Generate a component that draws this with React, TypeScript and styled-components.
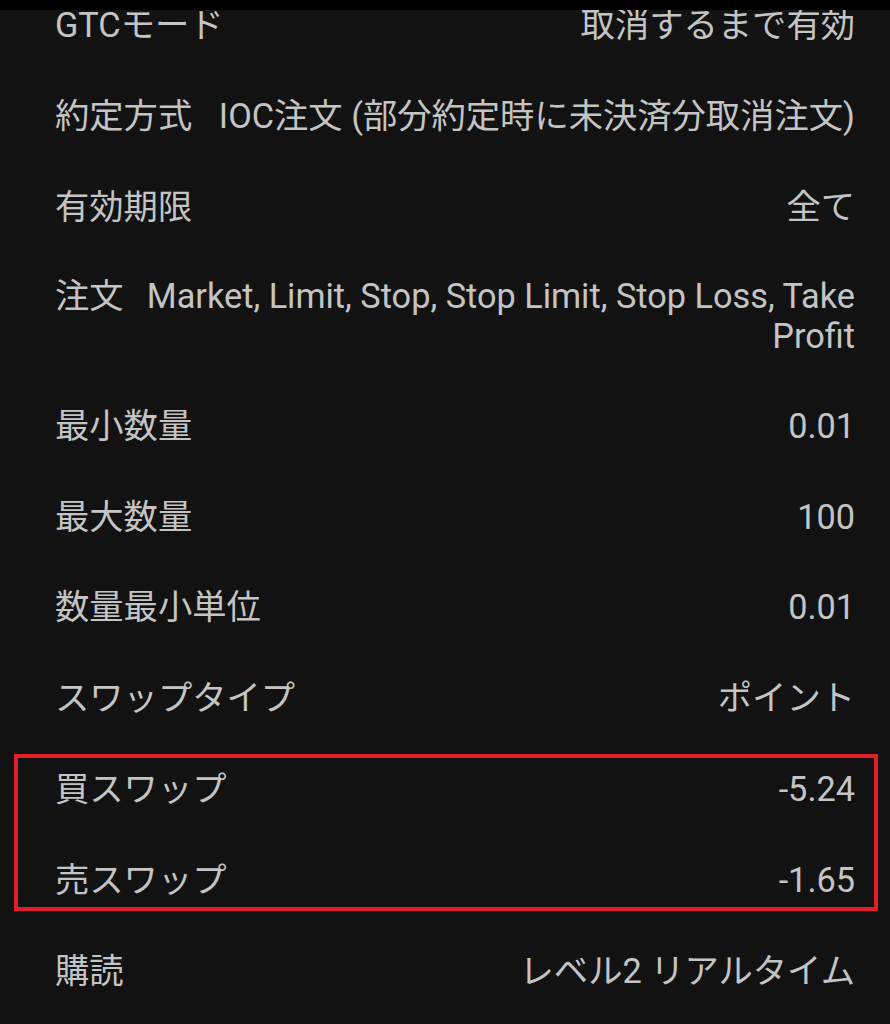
import React from "react";
import styled, { createGlobalStyle } from "styled-components";

const Global = createGlobalStyle`
  html, body {
    margin: 0;
    padding: 0;
    background: #121212;
    overflow: hidden;
  }
  * { box-sizing: border-box; }
`;

const Screen = styled.div`
  position: relative;
  width: 890px;
  height: 1024px;
  overflow: hidden;
  background: #121212;
  font-family: Roboto, "Noto Sans CJK JP", sans-serif;
  color: #c4c4c4;
`;

const StatusBar = styled.div`
  position: absolute;
  top: 0;
  left: 0;
  right: 0;
  height: 10px;
  background: #000;
  z-index: 2;
`;

const List = styled.div`
  display: flex;
  flex-direction: column;
  margin-top: -20px;
`;

const Row = styled.div`
  display: flex;
  align-items: center;
  min-height: 90.8px;
  padding: 24px 35px 24px 55px;
  font-size: 34.3px;
  line-height: 40px;
`;

const Line = styled.div`
  display: flex;
  justify-content: space-between;
  align-items: flex-start;
  gap: 18px;
  width: 100%;
`;

const Label = styled.span`
  flex: none;
  white-space: nowrap;
`;

const Value = styled.span`
  text-align: right;
`;

const Highlight = styled.div`
  position: relative;
  &::after {
    content: "";
    position: absolute;
    top: 10px;
    left: 14px;
    right: 12px;
    bottom: 14px;
    border: 4px solid #e41e26;
    pointer-events: none;
  }
`;

const rows: [string, string][] = [
  ["GTCモード", "取消するまで有効"],
  ["約定方式", "IOC注文 (部分約定時に未決済分取消注文)"],
  ["有効期限", "全て"],
  ["注文", "Market, Limit, Stop, Stop Limit, Stop Loss, Take Profit"],
  ["最小数量", "0.01"],
  ["最大数量", "100"],
  ["数量最小単位", "0.01"],
  ["スワップタイプ", "ポイント"],
];

const swaps: [string, string][] = [
  ["買スワップ", "-5.24"],
  ["売スワップ", "-1.65"],
];

const InfoRow = ({ label, value }: { label: string; value: string }) => (
  <Row>
    <Line>
      <Label>{label}</Label>
      <Value>{value}</Value>
    </Line>
  </Row>
);

export default function App() {
  return (
    <Screen>
      <Global />
      <StatusBar />
      <List>
        {rows.map(([l, v]) => (
          <InfoRow key={l} label={l} value={v} />
        ))}
        <Highlight>
          {swaps.map(([l, v]) => (
            <InfoRow key={l} label={l} value={v} />
          ))}
        </Highlight>
        <InfoRow label="購読" value="レベル2 リアルタイム" />
      </List>
    </Screen>
  );
}
